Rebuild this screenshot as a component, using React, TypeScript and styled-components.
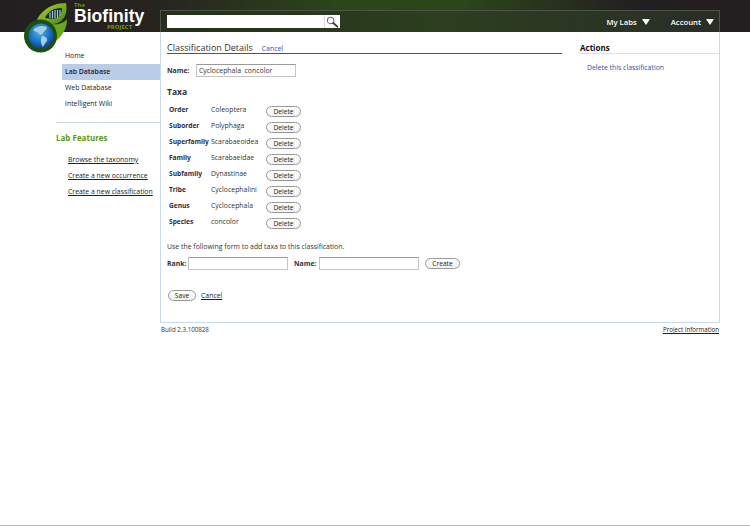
import React from "react";
import styled, { createGlobalStyle } from "styled-components";

const GlobalStyle = createGlobalStyle`
  html, body {
    margin: 0;
    padding: 0;
    background: #fff;
    font-family: "Open Sans", "DejaVu Sans", sans-serif;
    font-size: 6.9px;
    color: #333;
  }
`;

const Page = styled.div`
  position: relative;
  width: 750px;
  height: 526px;
  box-sizing: border-box;
  border-bottom: 1px solid #bdbdbd;
`;

const TopBar = styled.header`
  height: 32px;
  box-sizing: border-box;
  padding: 10px 30px 0 160px;
  background: linear-gradient(90deg, #231f20 0, #262320 20%, #2c4519 45%, #2c4519 62%, #231f20 85%, #231f20 100%);
`;

const Toolbar = styled.div`
  height: 22px;
  box-sizing: border-box;
  display: flex;
  align-items: center;
  justify-content: space-between;
  padding: 0 5px 0 6px;
  border: 1px solid #4e524a;
  border-bottom: 0;
  background: linear-gradient(90deg, #243019 0, #2c3f1f 50%, #2a2d27 100%);
`;

const SearchBox = styled.div`
  width: 173px;
  height: 13px;
  display: flex;
  background: #fff;
`;

const SearchInput = styled.input`
  flex: 1;
  min-width: 0;
  padding: 0;
  border: 0;
  background: transparent;
`;

const SearchIcon = styled.div`
  width: 15px;
  display: flex;
  align-items: center;
  justify-content: center;
  border-left: 1px solid #dcdcdc;
`;

const Menus = styled.div`
  display: flex;
  gap: 21px;
`;

const Menu = styled.span`
  display: flex;
  align-items: center;
  gap: 5px;
  color: #fff;
  font-size: 7.7px;
  font-weight: 600;
`;

const Arrow = styled.i`
  width: 0;
  height: 0;
  border-left: 4px solid transparent;
  border-right: 4px solid transparent;
  border-top: 6px solid #fff;
`;

const Logo = styled.div`
  position: absolute;
  left: 23px;
  top: 2px;
  width: 46px;
  height: 52px;
`;

const Brand = styled.div`
  position: absolute;
  left: 74px;
  top: 2px;
  width: 76px;
  height: 30px;
`;

const BrandThe = styled.span`
  position: absolute;
  left: 0;
  top: 0;
  color: #6f8f24;
  font: 700 6px/6px "Open Sans", sans-serif;
`;

const BrandName = styled.span`
  position: absolute;
  left: 0;
  top: 6px;
  color: #fff;
  font: 700 17.6px/16px "Liberation Sans", sans-serif;
`;

const BrandProject = styled.span`
  position: absolute;
  left: 33px;
  top: 22px;
  color: #6f9a1e;
  font: 700 6px/6px "Open Sans", sans-serif;
`;

const Body = styled.div`
  display: flex;
`;

const Sidebar = styled.nav`
  width: 160px;
  flex: none;
  padding-top: 16px;
`;

const NavList = styled.div`
  margin-left: 62px;
`;

const NavItem = styled.div<{ $active?: boolean }>`
  height: 16px;
  line-height: 16px;
  padding-left: 3px;
  font-weight: ${(p) => (p.$active ? 600 : 400)};
  background: ${(p) => (p.$active ? "#b9cde9" : "transparent")};
  color: #222;
`;

const SideDivider = styled.div`
  margin: 10px 0 0 56px;
  border-top: 1px solid #c8daf0;
`;

const SideTitle = styled.h3`
  margin: 10px 0 9px 56px;
  color: #5c9a12;
  font-size: 8px;
  line-height: 10px;
  font-weight: 700;
`;

const FeatureLink = styled.a`
  display: block;
  height: 16px;
  line-height: 16px;
  margin-left: 68px;
  color: #222;
  text-decoration: underline;
`;

const Panel = styled.main`
  width: 560px;
  height: 291px;
  box-sizing: border-box;
  display: flex;
  border: 1px solid #c8daf0;
  border-top: 0;
`;

const MainColumn = styled.section`
  width: 395px;
  margin-left: 6px;
  flex: none;
`;

const Heading = styled.div`
  display: flex;
  align-items: baseline;
  gap: 9px;
  height: 22px;
  box-sizing: border-box;
  padding-top: 10px;
  border-bottom: 1px solid #555;
`;

const HeadingTitle = styled.h1`
  margin: 0;
  font-size: 9px;
  line-height: 11px;
  font-weight: 400;
`;

const BlueLink = styled.a`
  color: #2a4fb0;
`;

const NameRow = styled.div`
  display: flex;
  align-items: center;
  margin-top: 10px;
`;

const FieldLabel = styled.label<{ $width: number }>`
  width: ${(p) => p.$width}px;
  font-weight: 700;
`;

const TextField = styled.input<{ $width: number }>`
  width: ${(p) => p.$width}px;
  height: 13px;
  box-sizing: border-box;
  margin: 0;
  padding: 0 0 0 2px;
  border: 1px solid #c4c4c4;
  border-top-color: #9a9a9a;
  border-radius: 0;
  outline: 0;
  background: #fff;
  color: #333;
  font: 6.9px/11px "Open Sans", "DejaVu Sans", sans-serif;
`;

const SectionTitle = styled.h2`
  margin: 9px 0 6px;
  font-size: 8.5px;
  line-height: 11px;
  font-weight: 700;
`;

const TaxonRow = styled.div`
  display: flex;
  height: 16px;
  padding-left: 2px;
`;

const Rank = styled.span`
  width: 42px;
  line-height: 14px;
  font-size: 6.6px;
  font-weight: 700;
  color: #2a2f40;
  white-space: nowrap;
`;

const Value = styled.span`
  width: 55px;
  line-height: 14px;
  white-space: nowrap;
`;

const PillButton = styled.button<{ $width: number; $inRow?: boolean }>`
  width: ${(p) => p.$width}px;
  height: 11px;
  margin-top: ${(p) => (p.$inRow ? 3 : 0)}px;
  padding: 0;
  border: 1px solid #999;
  border-radius: 6px;
  background: linear-gradient(#fff, #f0f0f0);
  color: #222;
  font: 6.6px/9px "Open Sans", "DejaVu Sans", sans-serif;
`;

const Hint = styled.p`
  margin: 9px 0 3px;
  line-height: 14px;
`;

const RankForm = styled.div`
  display: flex;
  align-items: center;
`;

const Gap = styled.div<{ $width: number }>`
  width: ${(p) => p.$width}px;
`;

const FormButtons = styled.div`
  display: flex;
  align-items: center;
  gap: 5px;
  margin-top: 20px;
  padding-left: 1px;
`;

const PlainLink = styled.a`
  color: #222;
  text-decoration: underline;
`;

const ActionsColumn = styled.aside`
  flex: 1;
  margin-left: 18px;
`;

const ActionsTitle = styled.div`
  height: 22px;
  box-sizing: border-box;
  padding-top: 10px;
  line-height: 11px;
  font-size: 8px;
  font-weight: 700;
  color: #111;
  border-bottom: 1px solid #d5e2f2;
`;

const ActionItem = styled.div`
  margin: 8px 0 0 7px;
  line-height: 11px;
`;

const Footer = styled.footer`
  display: flex;
  justify-content: space-between;
  width: 558px;
  margin: 3px 0 0 161px;
  font-size: 6.2px;
  line-height: 8px;
`;

const taxa = [
  ["Order", "Coleoptera"],
  ["Suborder", "Polyphaga"],
  ["Superfamily", "Scarabaeoidea"],
  ["Family", "Scarabaeidae"],
  ["Subfamily", "Dynastinae"],
  ["Tribe", "Cyclocephalini"],
  ["Genus", "Cyclocephala"],
  ["Species", "concolor"],
];

const LogoMark = () => (
  <svg width="46" height="52" viewBox="0 0 46 52">
    <defs>
      <radialGradient id="globe" cx="0.45" cy="0.35" r="0.7">
        <stop offset="0" stopColor="#4fb6ec" />
        <stop offset="0.6" stopColor="#1a6cc0" />
        <stop offset="1" stopColor="#0c3a84" />
      </radialGradient>
      <linearGradient id="leaf" x1="0" y1="0" x2="1" y2="1">
        <stop offset="0" stopColor="#b4d834" />
        <stop offset="1" stopColor="#3f8214" />
      </linearGradient>
    </defs>
    <path d="M12 24C14 12 26 1 43 1C45 10 42 20 31 22L18 24Z" fill="url(#leaf)" />
    <path d="M22 16C25 9 31 6 39 6C39 12 36 16 31 17Z" fill="#1c2a24" />
    <path d="M27 10.5V16M29.5 9V16.5M32 8V16.5M34.5 8V16M37 8V14" stroke="#9cc4e4" strokeWidth="1.2" />
    <path d="M44 17C44 27 39 35 30 41C31 33 31 27 29 22C35 23 41 21 44 17Z" fill="#6aa81a" />
    <circle cx="17.5" cy="34" r="16.5" fill="#1d4f12" />
    <circle cx="18" cy="34" r="12.5" fill="url(#globe)" />
    <path d="M10 28C13 24 20 23 24 25C24 28 21 29 20 31L18 33C16 32 15 30 13 30C12 29 11 29 10 28Z" fill="#9fcfe0" />
    <path d="M19 34C22 34 25 36 24 39C22 41 21 43 20 45C18 42 17 37 19 34Z" fill="#9fcfe0" />
  </svg>
);

const MagnifierIcon = () => (
  <svg width="13" height="12" viewBox="0 0 13 12">
    <circle cx="4.6" cy="4.4" r="3.2" fill="#fff" stroke="#6c7078" strokeWidth="1.1" />
    <path d="M7.2 7L11.4 10.6" stroke="#3a3a3a" strokeWidth="1.8" strokeLinecap="round" />
  </svg>
);

export default function App() {
  return (
    <Page>
      <GlobalStyle />
      <TopBar>
        <Toolbar>
          <SearchBox>
            <SearchInput />
            <SearchIcon>
              <MagnifierIcon />
            </SearchIcon>
          </SearchBox>
          <Menus>
            <Menu>
              My Labs <Arrow />
            </Menu>
            <Menu>
              Account <Arrow />
            </Menu>
          </Menus>
        </Toolbar>
      </TopBar>
      <Logo>
        <LogoMark />
      </Logo>
      <Brand>
        <BrandThe>The</BrandThe>
        <BrandName>Biofinity</BrandName>
        <BrandProject>PROJECT</BrandProject>
      </Brand>
      <Body>
        <Sidebar>
          <NavList>
            <NavItem>Home</NavItem>
            <NavItem $active>Lab Database</NavItem>
            <NavItem>Web Database</NavItem>
            <NavItem>Intelligent Wiki</NavItem>
          </NavList>
          <SideDivider />
          <SideTitle>Lab Features</SideTitle>
          <FeatureLink>Browse the taxonomy</FeatureLink>
          <FeatureLink>Create a new occurrence</FeatureLink>
          <FeatureLink>Create a new classification</FeatureLink>
        </Sidebar>
        <Panel>
          <MainColumn>
            <Heading>
              <HeadingTitle>Classification Details</HeadingTitle>
              <BlueLink>Cancel</BlueLink>
            </Heading>
            <NameRow>
              <FieldLabel $width={29}>Name:</FieldLabel>
              <TextField $width={100} defaultValue="Cyclocephala  concolor" />
            </NameRow>
            <SectionTitle>Taxa</SectionTitle>
            {taxa.map(([rank, value]) => (
              <TaxonRow key={rank}>
                <Rank>{rank}</Rank>
                <Value>{value}</Value>
                <PillButton $width={35} $inRow>Delete</PillButton>
              </TaxonRow>
            ))}
            <Hint>Use the following form to add taxa to this classification.</Hint>
            <RankForm>
              <FieldLabel $width={21}>Rank:</FieldLabel>
              <TextField $width={100} />
              <Gap $width={6} />
              <FieldLabel $width={25}>Name:</FieldLabel>
              <TextField $width={100} />
              <Gap $width={6} />
              <PillButton $width={35}>Create</PillButton>
            </RankForm>
            <FormButtons>
              <PillButton $width={28}>Save</PillButton>
              <PlainLink>Cancel</PlainLink>
            </FormButtons>
          </MainColumn>
          <ActionsColumn>
            <ActionsTitle>Actions</ActionsTitle>
            <ActionItem>
              <BlueLink>Delete this classification</BlueLink>
            </ActionItem>
          </ActionsColumn>
        </Panel>
      </Body>
      <Footer>
        <span>Build 2.3.100828</span>
        <PlainLink>Project Information</PlainLink>
      </Footer>
    </Page>
  );
}
